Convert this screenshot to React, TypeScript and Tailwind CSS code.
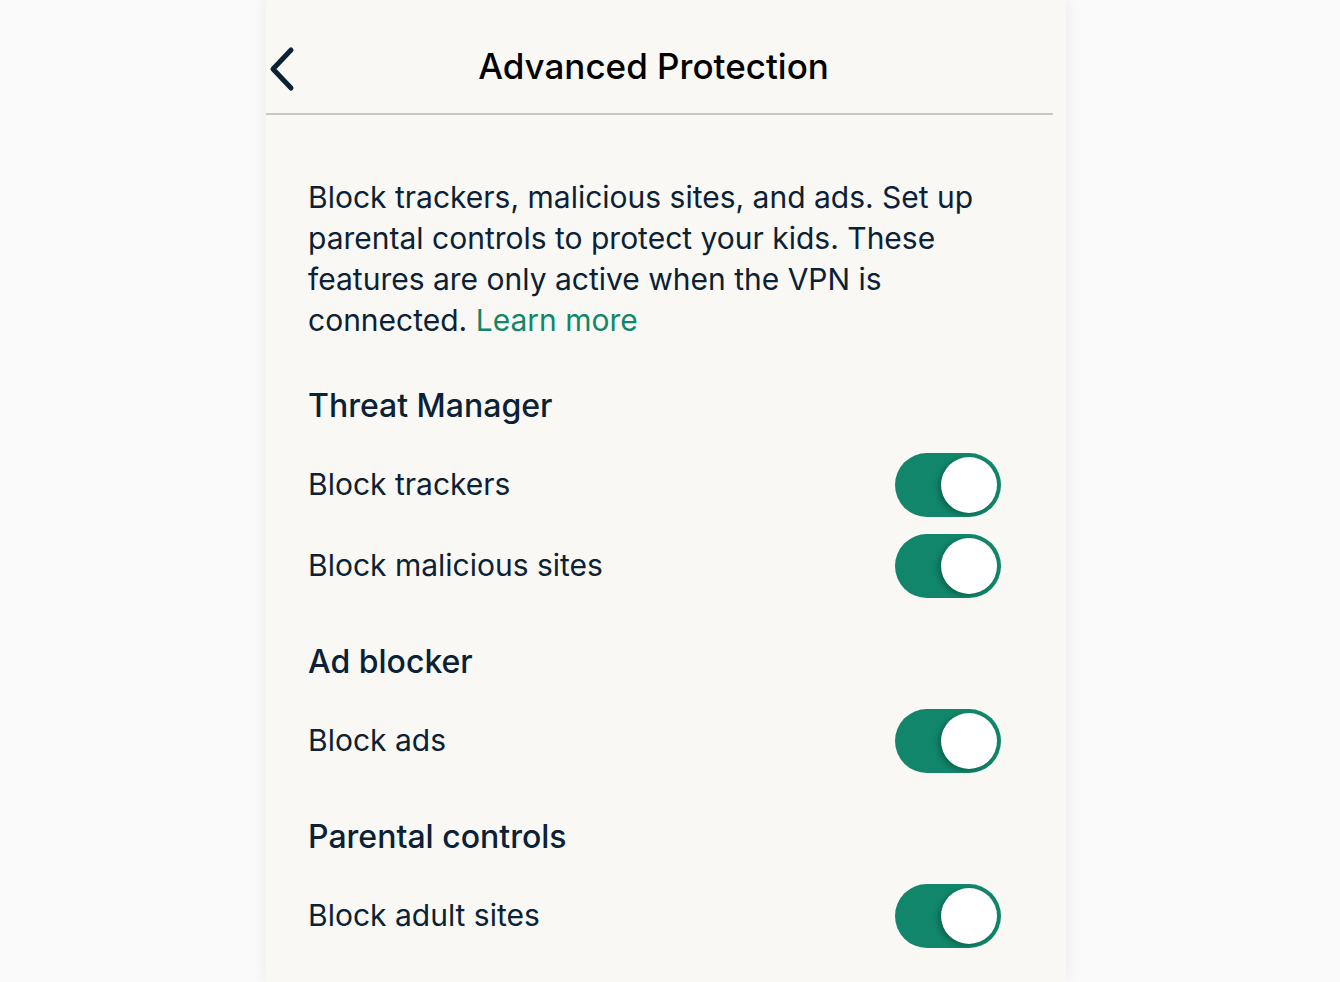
import React from 'react';

function Toggle() {
  return (
    <div className="w-[106px] h-[64px] rounded-full bg-[#11866a] flex items-center justify-end p-[4px] shrink-0">
      <div className="w-[56px] h-[56px] rounded-full bg-white shadow-[-3px_2px_5px_rgba(0,0,0,0.25)]" />
    </div>
  );
}

function Row({ label }: { label: string }) {
  return (
    <div className="flex items-center justify-between h-[81px]">
      <span className="text-[30px] text-[#0b2135]">{label}</span>
      <Toggle />
    </div>
  );
}

function Section({ title, rows }: { title: string; rows: string[] }) {
  return (
    <div>
      <h2 className="text-[32px] font-medium text-[#0b2135] leading-[40px]">{title}</h2>
      <div className="mt-[18px]">
        {rows.map((r) => (
          <Row key={r} label={r} />
        ))}
      </div>
    </div>
  );
}

export default function App() {
  return (
    <div className="min-h-screen bg-[#f9f9f9] overflow-hidden" style={{ fontFamily: 'Inter, "Noto Sans", sans-serif' }}>
      <div className="ml-[266px] w-[800px] min-h-[982px] bg-[#f9f8f4] shadow-[0_0_14px_rgba(0,0,0,0.06)]">
        <header className="relative h-[115px] flex items-center justify-center border-b-2 border-[#c9c8c2] mr-[13px]">
          <button className="absolute left-[3px] top-[46px] w-[30px] h-[46px] flex items-center">
            <svg width="28" height="46" viewBox="0 0 28 46" fill="none">
              <path d="M22 4 L4 23 L22 42" stroke="#0b2135" strokeWidth="5" strokeLinecap="round" strokeLinejoin="round" />
            </svg>
          </button>
          <h1 className="text-[35px] font-medium text-black mt-[20px] ml-[-12px]">Advanced Protection</h1>
        </header>
        <main className="pl-[42px] pr-[65px] pt-[62px]">
          <p className="text-[30px] leading-[41px] text-[#0b2135] pr-[20px]">
            Block trackers, malicious sites, and ads. Set up parental controls to protect your kids. These features are only active when the VPN is connected.{' '}
            <a className="text-[#118669]">Learn more</a>
          </p>
          <div className="mt-[45px]">
            <Section title="Threat Manager" rows={['Block trackers', 'Block malicious sites']} />
          </div>
          <div className="mt-[36px]">
            <Section title="Ad blocker" rows={['Block ads']} />
          </div>
          <div className="mt-[36px]">
            <Section title="Parental controls" rows={['Block adult sites']} />
          </div>
        </main>
      </div>
    </div>
  );
}
